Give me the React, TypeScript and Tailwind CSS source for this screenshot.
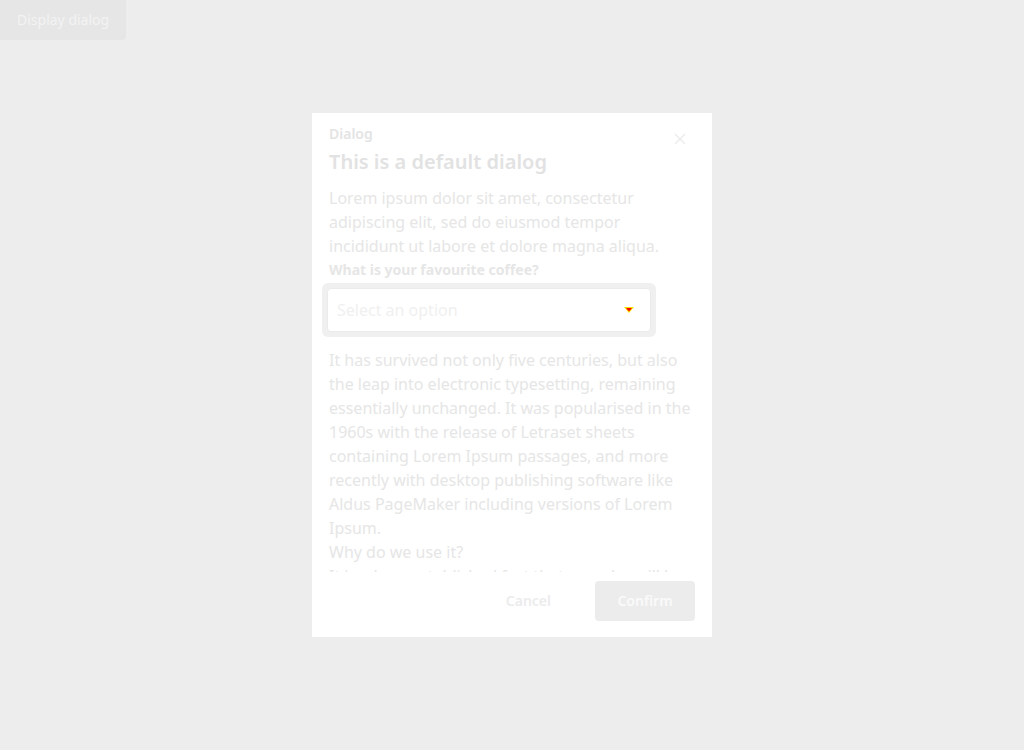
import React from 'react';

const font = { fontFamily: '"Noto Sans", "Open Sans", "Liberation Sans", sans-serif' };

function Caret() {
  return (
    <svg width="10" height="6" viewBox="0 0 10 6" className="block">
      <polygon points="0,0 10,0 5,6" fill="#f5e400" />
      <polygon points="2,1 8,1 5,4.5" fill="#ff0000" />
    </svg>
  );
}

export default function App() {
  return (
    <div className="relative w-[1024px] h-[750px] bg-[#ededed] overflow-hidden" style={font}>
      <button className="h-10 px-[17px] bg-[#e6e6e6] text-[#f3f3f3] text-sm rounded-br-sm">
        Display dialog
      </button>

      <div className="absolute left-[312px] top-[113px] w-[400px] h-[524px] bg-white flex flex-col">
        <button className="absolute right-[26px] top-[20px] text-[#ebebeb]">
          <svg width="12" height="12" viewBox="0 0 12 12" className="block">
            <path d="M1 1 L11 11 M11 1 L1 11" stroke="currentColor" strokeWidth="1.4" />
          </svg>
        </button>

        <div className="pt-[11px] pl-[17px] pr-4">
          <div className="text-sm font-semibold leading-5 text-[#e4e4e4]">Dialog</div>
          <h2 className="mt-1 text-xl font-semibold leading-7 text-[#e2e2e2]">This is a default dialog</h2>
        </div>

        <div className="flex-1 overflow-hidden pl-[17px] pr-4 pt-[10px] text-base leading-6 text-[#e6e6e6]">
          <p>
            Lorem ipsum dolor sit amet, consectetur adipiscing elit, sed do eiusmod tempor incididunt ut labore et
            dolore magna aliqua.
          </p>
          <label className="block text-sm font-bold leading-6 text-[#e6e6e6]">What is your favourite coffee?</label>
          <div className="mt-[1px] ml-[-7px] w-[334px] p-[5px] rounded-md bg-[#f0f0f0]">
            <div className="h-11 flex items-center justify-between pl-[9px] pr-[16px] bg-white border border-[#ebebeb] rounded-sm">
              <span className="text-[#f0f0f0]">Select an option</span>
              <Caret />
            </div>
          </div>
          <p className="mt-[11px]">
            It has survived not only five centuries, but also the leap into electronic typesetting, remaining
            essentially unchanged. It was popularised in the 1960s with the release of Letraset sheets containing
            Lorem Ipsum passages, and more recently with desktop publishing software like Aldus PageMaker including
            versions of Lorem Ipsum.
          </p>
          <p>Why do we use it?</p>
          <p>
            It is a long established fact that a reader will be distracted by the readable content of a page when
            looking at its layout.
          </p>
        </div>

        <div className="flex justify-end items-center gap-6 pl-4 pr-[17px] pt-[9px] pb-4">
          <button className="h-10 px-5 text-sm font-semibold text-[#ececec]">Cancel</button>
          <button className="h-10 w-[100px] rounded-sm bg-[#ececec] text-sm font-semibold text-[#fafafa]">
            Confirm
          </button>
        </div>
      </div>
    </div>
  );
}
